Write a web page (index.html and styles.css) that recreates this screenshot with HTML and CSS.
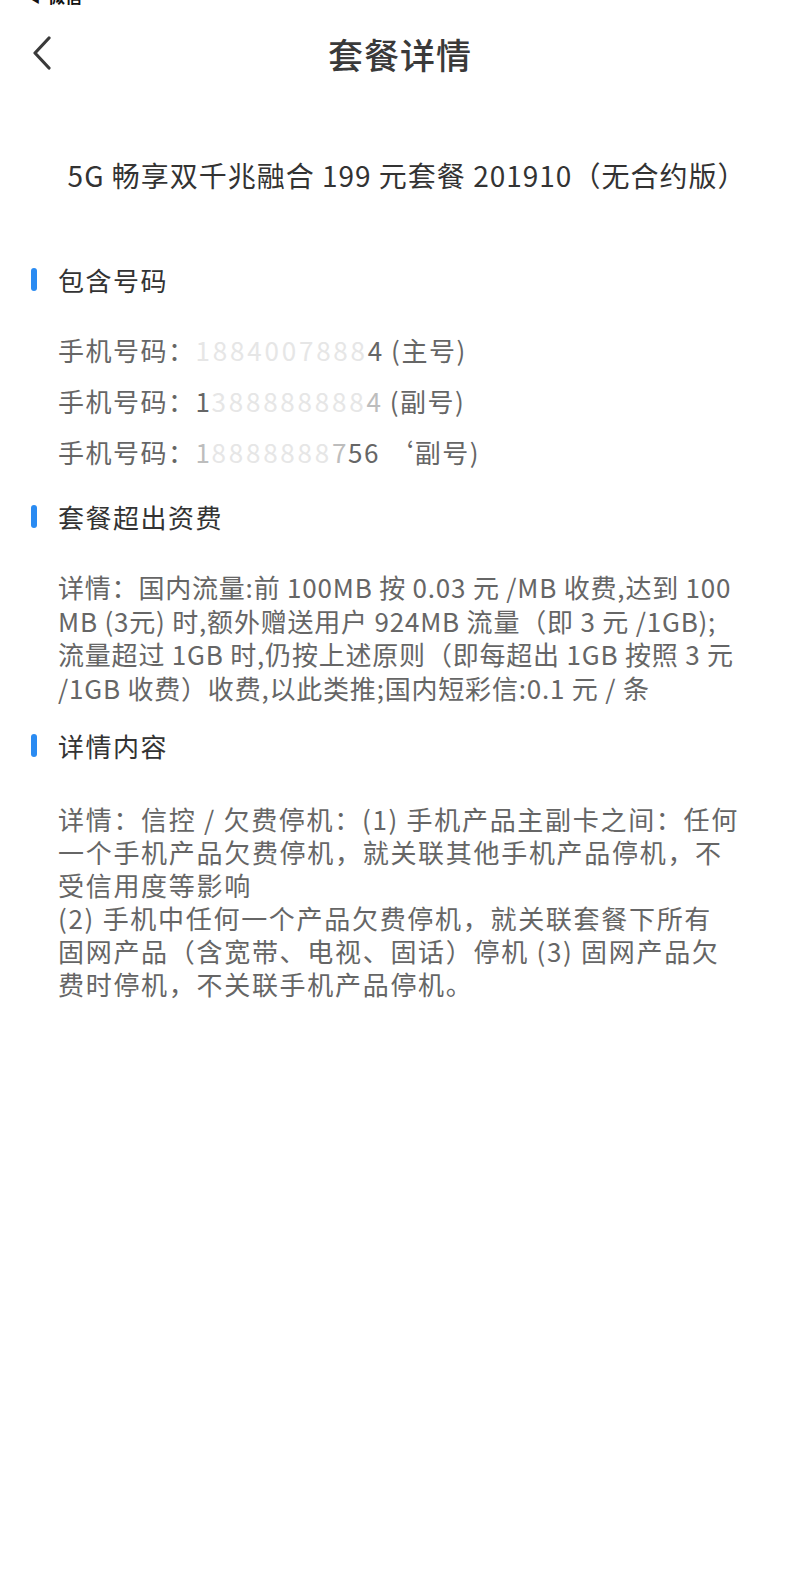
FILE: index.html
```html
<!DOCTYPE html>
<html lang="zh-CN">
<head>
<meta charset="utf-8">
<title>套餐详情</title>
<link rel="stylesheet" href="styles.css">
</head>
<body>
<div class="status"><div class="status-inner"><span class="tri">◀</span>微信</div></div>
<header class="nav">
  <a class="back" aria-label="返回">
    <svg width="22" height="34" viewBox="0 0 22 34"><path d="M18 2 L4 17 L18 32" fill="none" stroke="#3a3a3a" stroke-width="3.2" stroke-linecap="round" stroke-linejoin="round"/></svg>
  </a>
  <h1 class="title">套餐详情</h1>
</header>
<main>
  <p class="plan">5G 畅享双千兆融合 199 元套餐 201910（无合约版）</p>

  <section class="sec sec-numbers">
    <h2 class="sec-head">包含号码</h2>
    <ul class="phones">
      <li>手机号码：<span class="blur">1884007888</span><span class="clear">4</span> (主号)</li>
      <li>手机号码：<span class="clear">1</span><span class="blur">388888888</span><span class="half">4</span> (副号)</li>
      <li>手机号码：<span class="half">1</span><span class="blur">8888888</span><span class="half">7</span><span class="clear">56</span> ‘副号)</li>
    </ul>
  </section>

  <section class="sec sec-fee">
    <h2 class="sec-head">套餐超出资费</h2>
    <p class="para">详情：国内流量:前 100MB 按 0.03 元 /MB 收费,达到 100<br>MB (3元) 时,额外赠送用户 924MB 流量（即 3 元 /1GB);<br>流量超过 1GB 时,仍按上述原则（即每超出 1GB 按照 3 元<br>/1GB 收费）收费,以此类推;国内短彩信:0.1 元 / 条</p>
  </section>

  <section class="sec sec-detail">
    <h2 class="sec-head">详情内容</h2>
    <p class="para para2">详情：信控 / 欠费停机：(1) 手机产品主副卡之间：任何<br>一个手机产品欠费停机，就关联其他手机产品停机，不<br>受信用度等影响<br>(2) 手机中任何一个产品欠费停机，就关联套餐下所有<br>固网产品（含宽带、电视、固话）停机 (3) 固网产品欠<br>费时停机，不关联手机产品停机。</p>
  </section>
</main>
</body>
</html>
```
FILE: styles.css
```css
* { box-sizing: border-box; }
html, body { margin: 0; padding: 0; background: #fff; }
body {
  width: 800px;
  min-height: 1571px;
  font-family: "Noto Sans CJK SC", "Noto Sans", sans-serif;
  color: #333;
}
.status {
  height: 5px;
  overflow: hidden;
  padding-left: 30px;
}
.status-inner {
  margin-top: -14px;
  font-size: 17px;
  line-height: 20px;
  font-weight: 700;
  color: #111;
}
.tri { font-size: 10px; margin-right: 8px; }
.nav {
  height: 96px;
  display: flex;
  align-items: center;
  justify-content: center;
  position: relative;
}
.back {
  position: absolute;
  left: 31px;
  top: 31px;
  width: 22px;
  height: 34px;
  display: block;
}
.title {
  margin: 0;
  font-size: 35px;
  font-weight: 500;
  color: #3a3a3a;
  letter-spacing: 1px;
}
.plan {
  margin: 57px 0 0;
  padding-left: 14px;
  text-align: center;
  font-size: 28px;
  line-height: 34px;
  letter-spacing: 1px;
  color: #333;
  white-space: nowrap;
}
.sec { padding-left: 58px; }
.sec-head {
  position: relative;
  margin: 0;
  font-size: 26px;
  line-height: 34px;
  font-weight: 400;
  letter-spacing: 1.5px;
  color: #333;
}
.sec-head::before {
  content: "";
  position: absolute;
  left: -27px;
  top: 5px;
  width: 6px;
  height: 23px;
  border-radius: 3px;
  background: #2a8bf2;
}
.sec-numbers { margin-top: 71px; }
.phones {
  list-style: none;
  margin: 27px 0 0;
  padding: 0;
  font-size: 26px;
  line-height: 51px;
  letter-spacing: 1.5px;
  color: #666;
}
.blur { color: #e6e6e6; letter-spacing: 2.8px; }
.half { color: #bdbdbd; }
.clear { color: #666; }
.sec-fee { margin-top: 23px; }
.para {
  margin: 36px 0 0;
  font-size: 26px;
  line-height: 33.5px;
  letter-spacing: 0.8px;
  color: #666;
  white-space: nowrap;
}
.sec-detail { margin-top: 25px; }
.para2 { margin-top: 39px; line-height: 33px; letter-spacing: 1.7px; }
```
